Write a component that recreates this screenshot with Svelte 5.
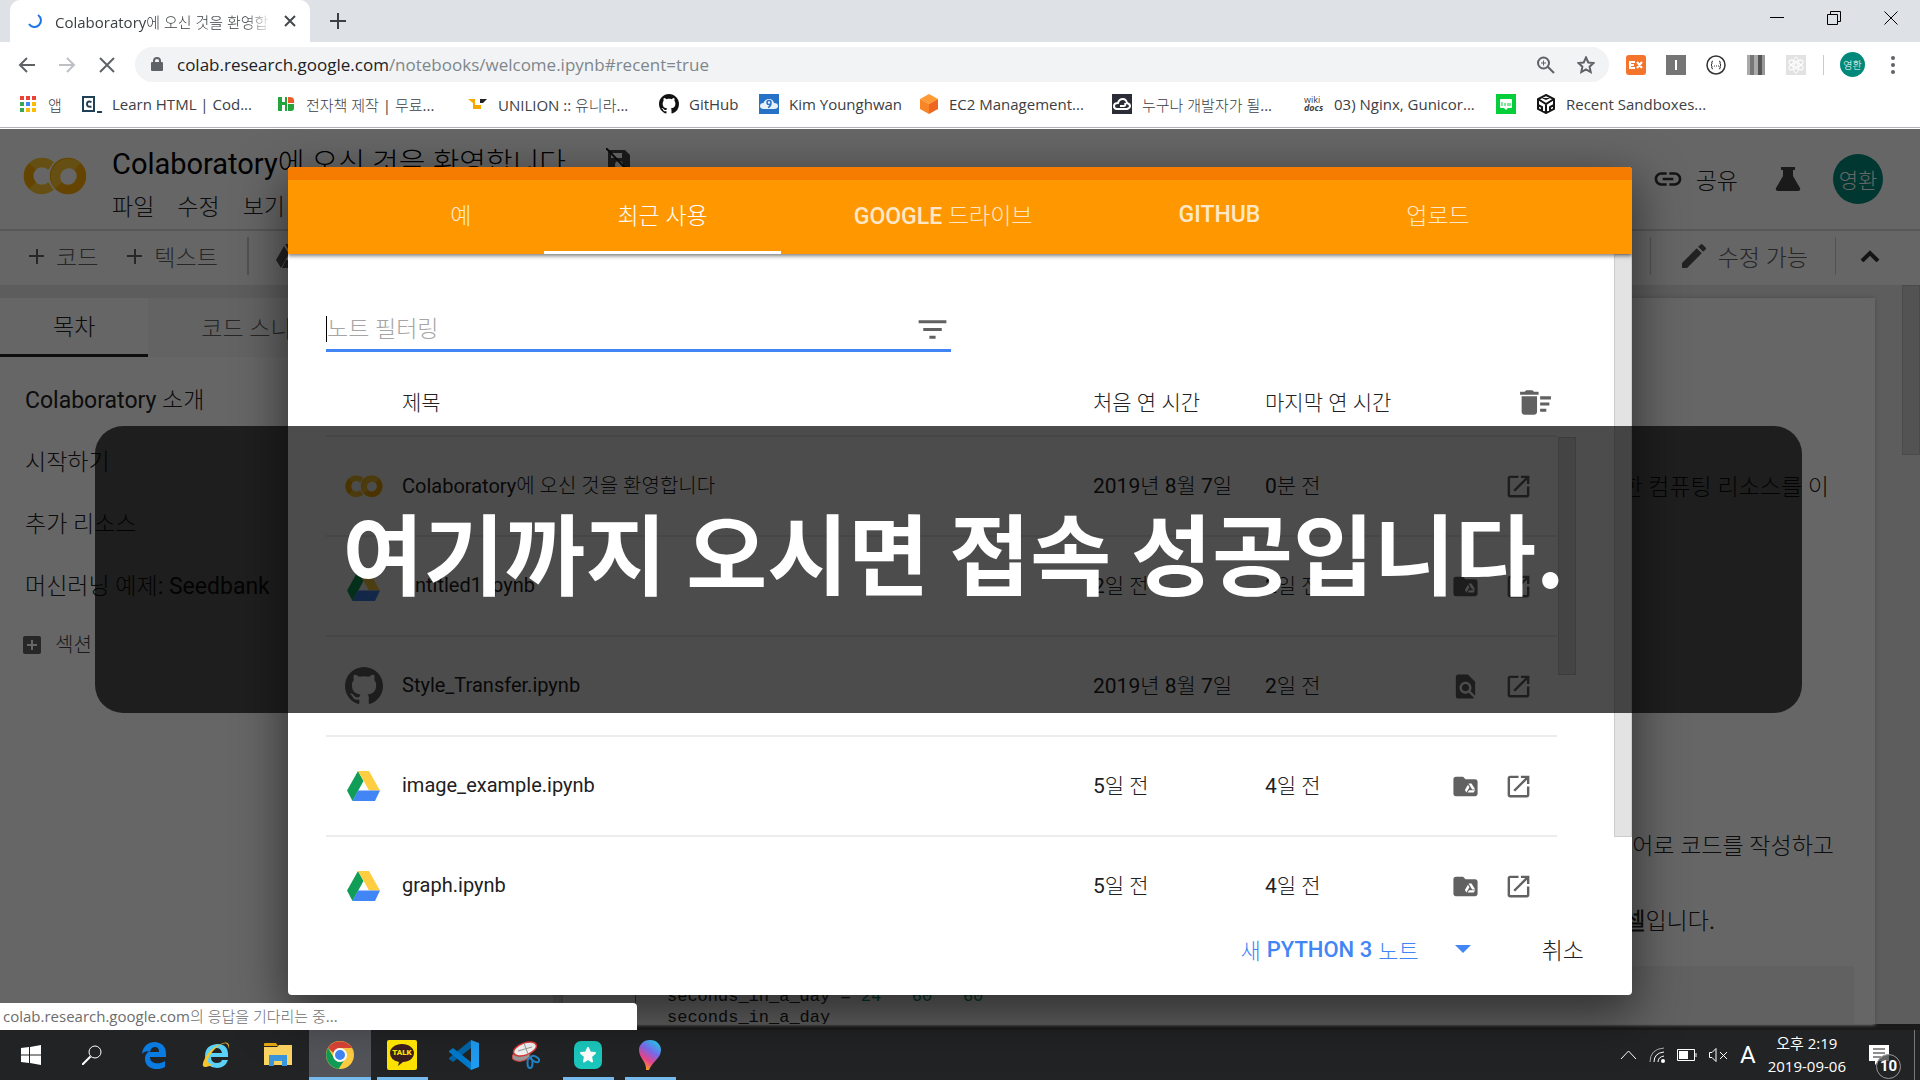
<script lang="ts">
	type Source = 'colab' | 'drive' | 'github';

	let filter = $state('');
	let activeTab = $state(1);

	const bookmarks = [
		{ icon: 'apps', label: '앱', width: 64 },
		{ icon: 'code', label: 'Learn HTML | Cod...', width: 194 },
		{ icon: 'hb', label: '전자책 제작 | 무료...', width: 192 },
		{ icon: 'unilion', label: 'UNILION :: 유니라...', width: 191 },
		{ icon: 'github', label: 'GitHub', width: 100 },
		{ icon: 'cloud', label: 'Kim Younghwan', width: 160 },
		{ icon: 'cube', label: 'EC2 Management...', width: 193 },
		{ icon: 'darkcloud', label: '누구나 개발자가 될...', width: 192 },
		{ icon: 'wiki', label: '03) Nginx, Gunicor...', width: 192 },
		{ icon: 'blog', label: '', width: 40 },
		{ icon: 'sandbox', label: 'Recent Sandboxes...', width: 190 },
	];

	const tabs = ['예', '최근 사용', 'GOOGLE 드라이브', 'GITHUB', '업로드'];

	const notebooks: { source: Source; title: string; first: string; last: string; action: string }[] = [
		{ source: 'colab', title: 'Colaboratory에 오신 것을 환영합니다', first: '2019년 8월 7일', last: '0분 전', action: '' },
		{ source: 'drive', title: 'Untitled1.ipynb', first: '2일 전', last: '2일 전', action: 'folder' },
		{ source: 'github', title: 'Style_Transfer.ipynb', first: '2019년 8월 7일', last: '2일 전', action: 'find' },
		{ source: 'drive', title: 'image_example.ipynb', first: '5일 전', last: '4일 전', action: 'folder' },
		{ source: 'drive', title: 'graph.ipynb', first: '5일 전', last: '4일 전', action: 'folder' },
	];

	const toc = ['Colaboratory 소개', '시작하기', '추가 리소스', '머신러닝 예제: Seedbank'];

	const GITHUB =
		'M8 0C3.58 0 0 3.58 0 8c0 3.54 2.29 6.53 5.47 7.59.4.07.55-.17.55-.38 0-.19-.01-.82-.01-1.49-2.01.37-2.53-.49-2.69-.94-.09-.23-.48-.94-.82-1.13-.28-.15-.68-.52-.01-.53.63-.01 1.08.58 1.23.82.72 1.21 1.87.87 2.33.66.07-.52.28-.87.51-1.07-1.78-.2-3.64-.89-3.64-3.95 0-.87.31-1.59.82-2.15-.08-.2-.36-1.02.08-2.12 0 0 .67-.21 2.2.82.64-.18 1.32-.27 2-.27s1.36.09 2 .27c1.53-1.04 2.2-.82 2.2-.82.44 1.1.16 1.92.08 2.12.51.56.82 1.27.82 2.15 0 3.07-1.87 3.75-3.65 3.95.29.25.54.73.54 1.48 0 1.07-.01 1.93-.01 2.2 0 .21.15.46.55.38A8.01 8.01 0 0 0 16 8c0-4.42-3.58-8-8-8z';
</script>

{#snippet colabLogo()}
	<svg class="colab-logo" viewBox="0 0 64 38" aria-hidden="true">
		<g fill="none" stroke-width="9.500">
			<path d="M28.500 9.500A13.500 13.500 0 1 0 28.500 28.500" stroke="#fcc62d" />
			<path d="M9.500 9.500A13.500 13.500 0 0 0 9.500 28.500" stroke="#f9ab00" />
			<circle cx="45" cy="19" r="15" stroke="#fff" />
			<circle cx="45" cy="19" r="13.500" stroke="#f9ab00" />
			<path d="M35.500 28.500A13.500 13.500 0 0 1 54.500 9.500" stroke="#fcc62d" />
		</g>
	</svg>
{/snippet}

{#snippet driveLogo()}
	<svg class="drive-logo" viewBox="0 0 33 30" aria-hidden="true">
		<path d="M11 0L0 19.500 5.500 30 16.500 10z" fill="#0f9d58" />
		<path d="M11 0h11l11 19.500H22z" fill="#ffcd40" />
		<path d="M11 19.500h22L28 30H5.500z" fill="#4285f4" />
	</svg>
{/snippet}

{#snippet bookmarkIcon(name: string)}
	<svg class="bm-icon" viewBox="0 0 20 20" aria-hidden="true">
		{#if name === 'apps'}
			<path d="M2 2h4v4H2zM8 2h4v4H8zM14 2h4v4h-4z" fill="#ea4335" />
			<path d="M2 8h4v4H2zM2 14h4v4H2z" fill="#34a853" />
			<path d="M8 8h4v4H8z" fill="#4285f4" />
			<path d="M14 8h4v4h-4zM8 14h4v4H8zM14 14h4v4h-4z" fill="#fbbc04" />
		{:else if name === 'code'}
			<path d="M1 3h11v14H1zM15 18h5" fill="none" stroke="#1f4056" stroke-width="2" />
			<path d="M9.500 8Q5 6.500 5 10t4.500 2.500" fill="none" stroke="#1f4056" stroke-width="2" />
		{:else if name === 'hb'}
			<path d="M2 3h4v5h3V3h2v14H9v-6H6v6H2z" fill="#24a53b" />
			<path d="M12 3h2q5 0 4 6h-6z" fill="#ee5a29" />
			<path d="M12 10h6v4q0 3-3 3h-3z" fill="#24a53b" />
		{:else if name === 'unilion'}
			<path d="M0 5h7v6h6v4H5V9z" fill="#f6a800" />
			<path d="M12 5h7l-4 4h-3z" fill="#222" />
		{:else if name === 'github'}
			<path d={GITHUB} transform="scale(1.250)" fill="#111" />
		{:else if name === 'cloud'}
			<path d="M0 0h20v20H0z" fill="#2672c7" />
			<path d="M5 15q-4 0-4-3t3.500-3Q6 5 10 5t5 4q4 0 4 3t-4 3z" fill="#e8f0f8" />
			<path d="M12 8.500a2 2 0 1 0-2 2q2 0 2-2 0 4-3 5" fill="none" stroke="#2672c7" stroke-width="1.500" />
		{:else if name === 'cube'}
			<path d="M10 0l9 5-9 5-9-5z" fill="#ff9a35" />
			<path d="M1 5l9 5v10l-9-5z" fill="#f98524" />
			<path d="M19 5l-9 5v10l9-5z" fill="#ee6622" />
		{:else if name === 'darkcloud'}
			<path d="M0 0h20v20H0z" fill="#2b2d36" />
			<path d="M5 15q-3 0-3-3t4-3q1-4 5-4 3 0 4 4 3 1 3 3t-3 3zM8 12h4q2 0 1-3" fill="none" stroke="#fff" stroke-width="2" />
		{:else if name === 'blog'}
			<path d="M0 0h20v20H0z" fill="#04cf3a" />
			<path d="M5 5h10q1 0 1 1v7q0 1-1 1h-3l-2 2-2-2H5q-1 0-1-1V6q0-1 1-1z" fill="#fff" />
			<path d="M6 8v4M9 9v3M12 9v3M14 9v3" stroke="#04cf3a" />
		{:else if name === 'sandbox'}
			<path d="M10 1l8 4v10l-8 4-8-4V5zM2 5l8 5 8-5M10 10v9M6 3l4 2 4-2M2 11l4 2v4M18 11l-4 2v4" fill="none" stroke="#151515" stroke-width="2" />
		{/if}
	</svg>
{/snippet}

<div class="desktop">
	<header class="chrome">
		<div class="tabstrip">
			<div class="browser-tab">
				<svg class="spinner" viewBox="0 0 16 16" aria-hidden="true">
					<path d="M10 2A6.500 6.500 0 1 1 1 11" fill="none" stroke="#1a73e8" stroke-width="2" />
				</svg>
				<span class="tab-title">Colaboratory에 오신 것을 환영합</span>
				<button class="plain" aria-label="탭 닫기">
					<svg width="12" height="12" viewBox="0 0 12 12"><path d="M1 1l10 10M11 1L1 11" stroke="#45494d" stroke-width="2" /></svg>
				</button>
			</div>
			<button class="plain new-tab" aria-label="새 탭">
				<svg width="16" height="16" viewBox="0 0 16 16"><path d="M8 0v16M0 8h16" stroke="#3c4043" stroke-width="2" /></svg>
			</button>
			<div class="window-buttons">
				<button class="plain" aria-label="최소화">
					<svg width="14" height="14" viewBox="0 0 14 14"><path d="M0 6.500h14" stroke="#000" /></svg>
				</button>
				<button class="plain" aria-label="이전 크기로">
					<svg width="14" height="14" viewBox="0 0 14 14"><path d="M.5 3.500h10v10H.5zM3.500 3V.5h10v10H11" fill="none" stroke="#000" /></svg>
				</button>
				<button class="plain" aria-label="닫기">
					<svg width="14" height="14" viewBox="0 0 14 14"><path d="M.5.5l13 13M13.500.5l-13 13" stroke="#000" /></svg>
				</button>
			</div>
		</div>

		<div class="navbar">
			<button class="plain nav" aria-label="뒤로">
				<svg width="18" height="18" viewBox="0 0 18 18"><path d="M17 9H2M9 2L2 9l7 7" fill="none" stroke="#5f6368" stroke-width="2" /></svg>
			</button>
			<button class="plain nav" aria-label="앞으로">
				<svg width="18" height="18" viewBox="0 0 18 18"><path d="M1 9h15M9 2l7 7-7 7" fill="none" stroke="#bdc1c6" stroke-width="2" /></svg>
			</button>
			<button class="plain nav" aria-label="중지">
				<svg width="18" height="18" viewBox="0 0 18 18"><path d="M2 2l14 14M16 2L2 16" stroke="#5f6368" stroke-width="2" /></svg>
			</button>
			<div class="omnibox">
				<svg width="12" height="16" viewBox="0 0 12 16" aria-hidden="true">
					<path d="M1 5h10q1 0 1 1v7q0 1-1 1H1q-1 0-1-1V6q0-1 1-1z" fill="#5f6368" />
					<path d="M3 6V4a3 3 0 0 1 6 0v2" fill="none" stroke="#5f6368" stroke-width="2" />
				</svg>
				<span class="url">colab.research.google.com<span class="url-path">/notebooks/welcome.ipynb#recent=true</span></span>
				<svg width="18" height="18" viewBox="0 0 18 18" aria-hidden="true">
					<path d="M12 7A5.500 5.500 0 1 1 1 7a5.500 5.500 0 0 1 11 0zM11 11l6 6" fill="none" stroke="#5f6368" stroke-width="2" />
					<path d="M4 7h5M6.500 4.500v5" stroke="#5f6368" />
				</svg>
				<svg width="18" height="18" viewBox="0 0 18 18" aria-hidden="true">
					<path d="M9 1.500l2.300 5 5.200.6-3.900 3.600 1.100 5.300L9 13.300 4.300 16l1.100-5.300L1.500 7.100l5.200-.6z" fill="none" stroke="#5f6368" stroke-width="2" />
				</svg>
			</div>
			<div class="extensions">
				<svg viewBox="0 0 20 20" aria-hidden="true">
					<rect width="20" height="20" rx="3" fill="#f4742b" />
					<path d="M9 7H4v6h5M4 10h4M11 7l5 6M16 7l-5 6" fill="none" stroke="#fff" stroke-width="2" />
				</svg>
				<svg viewBox="0 0 20 20" aria-hidden="true"><path d="M0 0h20v20H0z" fill="#757575" /><path d="M10 5v10" stroke="#fff" stroke-width="2" /></svg>
				<svg viewBox="0 0 20 20" aria-hidden="true">
					<circle cx="10" cy="10" r="9" fill="none" stroke="#333" stroke-width="1.500" />
					<path d="M7 6Q5 6 6 9l-1 1 1 1q-1 3 1 3M13 6q2 0 1 3l1 1-1 1q1 3-1 3" fill="none" stroke="#333" />
					<path d="M8 11h1M10 11h1M12 11h1" stroke="#333" />
				</svg>
				<svg viewBox="0 0 20 20" aria-hidden="true">
					<path d="M1 0h3v20H1z" fill="#aaa" /><path d="M4 0h4v20H4z" fill="#777" /><path d="M8 0h4v20H8z" fill="#aaa" />
					<path d="M12 0h4v20h-4z" fill="#555" /><path d="M16 0h3v20h-3z" fill="#999" />
				</svg>
				<svg viewBox="0 0 20 20" aria-hidden="true">
					<path d="M0 0h20v20H0z" fill="#e2e2e2" />
					<g fill="none" stroke="#fff">
						<ellipse cx="10" cy="10" rx="8" ry="3" transform="rotate(30 10 10)" />
						<ellipse cx="10" cy="10" rx="8" ry="3" transform="rotate(90 10 10)" />
						<ellipse cx="10" cy="10" rx="8" ry="3" transform="rotate(150 10 10)" />
						<circle cx="10" cy="10" r="2" />
					</g>
				</svg>
			</div>
			<div class="profile">영환</div>
			<button class="plain" aria-label="메뉴">
				<svg width="6" height="20" viewBox="0 0 6 20"><g fill="#5f6368"><circle cx="3" cy="3" r="2" /><circle cx="3" cy="10" r="2" /><circle cx="3" cy="17" r="2" /></g></svg>
			</button>
		</div>

		<nav class="bookmarks">
			{#each bookmarks as bookmark}
				<a href="#bookmark" class="bookmark" style:width="{bookmark.width}px" aria-label={bookmark.label || 'blog'}>
					{#if bookmark.icon === 'wiki'}
						<span class="wiki">wiki<b>docs</b></span>
					{:else}
						{@render bookmarkIcon(bookmark.icon)}
					{/if}
					<span>{bookmark.label}</span>
				</a>
			{/each}
		</nav>
	</header>

	<main class="page">
		<div class="colab-header">
			{@render colabLogo()}
			<div class="doc">
				<div class="doc-title">
					Colaboratory에 오신 것을 환영합니다
					<svg width="24" height="26" viewBox="0 0 24 26" aria-hidden="true">
						<path d="M4 2h15l5 5v15q0 2-2 2H4q-2 0-2-2V4q0-2 2-2z" fill="#444" />
						<path d="M5 5h11v5H5z" fill="#fff" /><circle cx="13" cy="17" r="4" fill="#fff" />
						<path d="M0 0l24 25" stroke="#222" stroke-width="2" />
					</svg>
				</div>
				<div class="menus"><span>파일</span><span>수정</span><span>보기</span></div>
			</div>
			<button class="plain share">
				<svg width="32" height="32" viewBox="0 0 24 24" aria-hidden="true">
					<path fill="#333" d="M3.900 12c0-1.710 1.390-3.100 3.100-3.100h4V7H7c-2.760 0-5 2.240-5 5s2.240 5 5 5h4v-1.900H7c-1.710 0-3.100-1.390-3.100-3.100zM8 13h8v-2H8v2zm9-6h-4v1.900h4c1.710 0 3.100 1.390 3.100 3.100s-1.390 3.100-3.100 3.100h-4V17h4c2.760 0 5-2.240 5-5s-2.240-5-5-5z" />
				</svg>
				공유
			</button>
			<svg width="26" height="26" viewBox="0 0 26 26" aria-hidden="true">
				<path d="M6 1h14v3h-2v6l7 12q1 3-2 3H3q-3 0-2-3l7-12V4H6z" fill="#424242" />
			</svg>
			<div class="avatar">영환</div>
		</div>

		<div class="colab-toolbar">
			<button class="plain add"><i class="plus"></i>코드</button>
			<button class="plain add"><i class="plus"></i>텍스트</button>
			<div class="drive-copy">
				<svg width="28" height="24" viewBox="0 0 28 24" aria-hidden="true"><path d="M9 0h9l10 15H18zM8 2L0 16l5 8 8-14zM10 16h18l-5 8H6z" fill="#555" /></svg>
			</div>
			<button class="plain editing">
				<svg width="32" height="32" viewBox="0 0 24 24" aria-hidden="true">
					<path d="M3 17.250V21h3.750L17.810 9.940l-3.750-3.750L3 17.250zM20.710 7.040a1 1 0 0 0 0-1.410l-2.340-2.340a1 1 0 0 0-1.410 0l-1.830 1.830 3.750 3.750z" fill="#555" />
				</svg>
				수정 가능
			</button>
			<button class="plain collapse" aria-label="접기">
				<svg width="20" height="12" viewBox="0 0 20 12"><path d="M2 11l8-8 8 8" fill="none" stroke="#333" stroke-width="4" /></svg>
			</button>
		</div>

		<div class="workspace">
			<aside class="sidebar">
				<div class="side-tabs">
					<button class="plain side-tab current">목차</button>
					<button class="plain side-tab">코드 스니펫</button>
				</div>
				<ul class="toc">
					{#each toc as entry}
						<li>{entry}</li>
					{/each}
					<li class="section">
						<svg width="18" height="18" viewBox="0 0 18 18" aria-hidden="true"><rect width="18" height="18" rx="2" fill="#616161" /><path d="M9 4v10M4 9h10" stroke="#fff" stroke-width="2" /></svg>
						섹션
					</li>
				</ul>
			</aside>
			<article class="notebook">
				<p class="para first">한 컴퓨팅 리소스를 이</p>
				<p class="para">어로 코드를 작성하고</p>
				<p class="para cell"><b>셀</b>입니다.</p>
				<pre class="code">seconds_in_a_day = <em>24</em> * <em>60</em> * <em>60</em>
seconds_in_a_day</pre>
			</article>
			<div class="page-thumb"></div>
		</div>

		<div class="backdrop">
			<div class="dialog" role="dialog" aria-label="노트 열기">
				<div class="dialog-tabs" role="tablist">
					{#each tabs as tab, i}
						<button class="dialog-tab" class:active={i === activeTab} role="tab" aria-selected={i === activeTab} onclick={() => (activeTab = i)}>{tab}</button>
					{/each}
				</div>
				<div class="dialog-body">
					<div class="filter">
						<i class="caret"></i>
						<input aria-label="노트 필터링" placeholder="노트 필터링" bind:value={filter} />
						<svg width="37" height="37" viewBox="0 0 24 24" aria-hidden="true"><path d="M10 18h4v-2h-4v2zM3 6v2h18V6H3zm3 7h12v-2H6v2z" fill="#616161" /></svg>
					</div>
					<div class="list">
						<table>
							<thead>
								<tr>
									<th class="col-icon" aria-label="종류"></th>
									<th>제목</th>
									<th class="col-first">처음 연 시간</th>
									<th class="col-last">마지막 연 시간</th>
									<th class="col-actions">
										<button class="plain" aria-label="목록 지우기">
											<svg width="37" height="37" viewBox="0 0 24 24"><path d="M15 16h4v2h-4zm0-8h7v2h-7zm0 4h6v2h-6zM3 18c0 1.100.9 2 2 2h6c1.100 0 2-.9 2-2V8H3v10zM14 5h-3l-1-1H6L5 5H2v2h12z" fill="#616161" /></svg>
										</button>
									</th>
								</tr>
							</thead>
							<tbody>
								{#each notebooks as nb}
									<tr>
										<td class="col-icon">
											{#if nb.source === 'colab'}
												{@render colabLogo()}
											{:else if nb.source === 'drive'}
												{@render driveLogo()}
											{:else}
												<svg class="gh-logo" viewBox="0 0 16 16" aria-hidden="true"><path d={GITHUB} fill="#616161" /></svg>
											{/if}
										</td>
										<td class="name">{nb.title}</td>
										<td class="date">{nb.first}</td>
										<td class="date">{nb.last}</td>
										<td class="col-actions">
											<div class="actions">
												{#if nb.action}
													<button class="plain" aria-label="위치 보기">
														<svg width="29" height="29" viewBox="0 0 24 24">
															{#if nb.action === 'folder'}
																<path d="M10 4H4c-1.100 0-2 .9-2 2v12c0 1.100.9 2 2 2h16c1.100 0 2-.9 2-2V8c0-1.100-.9-2-2-2h-8l-2-2z" fill="#616161" />
																<path d="M14.500 9.500h2.500l3 5h-2.500zM14 10.500l1.300 2.200-2.600 4.300-1.200-2.200zM15 15h5l-1.300 2h-5z" fill="#fff" />
															{:else}
																<path d="M20 19.590V8l-6-6H6c-1.100 0-2 .9-2 2v16c0 1.100.890 2 2 2h12c.450 0 .850-.150 1.190-.4l-4.430-4.430c-.8.520-1.740.830-2.760.830-2.760 0-5-2.240-5-5s2.240-5 5-5 5 2.240 5 5c0 1.020-.310 1.960-.830 2.750L20 19.590zM9 13c0 1.660 1.340 3 3 3s3-1.340 3-3-1.340-3-3-3-3 1.340-3 3z" fill="#616161" />
															{/if}
														</svg>
													</button>
												{/if}
												<button class="plain" aria-label="새 탭에서 열기">
													<svg width="29" height="29" viewBox="0 0 24 24"><path d="M19 19H5V5h7V3H5c-1.110 0-2 .9-2 2v14c0 1.100.890 2 2 2h14c1.100 0 2-.9 2-2v-7h-2v7zM14 3v2h3.590l-9.830 9.830 1.410 1.410L19 6.410V10h2V3h-7z" fill="#616161" /></svg>
												</button>
											</div>
										</td>
									</tr>
								{/each}
							</tbody>
						</table>
						<div class="list-thumb"></div>
					</div>
					<div class="dialog-thumb"></div>
				</div>
				<div class="dialog-footer">
					<button class="plain new-note">새 <b>PYTHON 3</b> 노트</button>
					<button class="plain more" aria-label="노트 종류"><svg width="16" height="8" viewBox="0 0 16 8"><path d="M0 0h16L8 8z" fill="#4285f4" /></svg></button>
					<button class="plain">취소</button>
				</div>
			</div>
		</div>
		<div class="status">colab.research.google.com의 응답을 기다리는 중...</div>
	</main>

	<footer class="taskbar">
		<button class="plain task start" aria-label="시작">
			<svg width="20" height="20" viewBox="0 0 20 20"><path d="M0 3l8-1v7.500H0zM9 2l11-2v9.500H9zM0 10.500h8V18l-8-1zM9 10.500h11V20L9 18z" fill="#fff" /></svg>
		</button>
		<button class="plain task" aria-label="검색">
			<svg width="20" height="20" viewBox="0 0 20 20"><circle cx="13" cy="7" r="6" fill="none" stroke="#fff" /><path d="M8.500 11.500L0 20" stroke="#fff" stroke-width="2" /></svg>
		</button>
		<button class="plain task" aria-label="Edge">
			<svg width="26" height="27" viewBox="0 0 26 27"><path d="M1 12C2 4 7 0 14 0q11 1 11 12v3H9c0 7 9 8 15 4v6c-9 5-20 1-20-8 0-4 2-7 5-8q-6 0-8 3zm8-2h9q0-5-4-5t-5 5z" fill="#0a7be0" /></svg>
		</button>
		<button class="plain task" aria-label="Internet Explorer">
			<svg width="30" height="28" viewBox="0 0 30 28">
				<path d="M27 16H10q0 6 6 6 4 0 5-3h6q-3 8-11 8Q4 26 4 15T16 3q12 0 11 13zm-17-4h11q-1-5-5.500-5T10 12z" fill="#5ad2f7" />
				<path d="M28 8Q29 0 22 2 9 7 4 17t1 9q3 0 7-3-6 1-5-5 4-9 12-14t9 4z" fill="#f6c52c" />
			</svg>
		</button>
		<button class="plain task" aria-label="파일 탐색기">
			<svg width="28" height="24" viewBox="0 0 28 24"><path d="M0 1q0-1 1-1h11l2 3H0z" fill="#e5a50f" /><path d="M0 4h13l2-2h13v20H0z" fill="#fcd462" /><path d="M5 12h18v11h-5v-5h-8v5H5z" fill="#3a96dd" /></svg>
		</button>
		<button class="plain task focused" aria-label="Chrome">
			<svg width="28" height="28" viewBox="0 0 28 28">
				<circle cx="14" cy="14" r="14" fill="#ffcd40" />
				<path d="M2 7a14 14 0 0 1 24.100 0H14a7 7 0 0 0-6.500 5z" fill="#db4437" />
				<path d="M2 7a14 14 0 0 0 10.500 20.900L19 18q-7 6-11-1z" fill="#0f9d58" />
				<circle cx="14" cy="14" r="6" fill="#4285f4" stroke="#fff" stroke-width="2" />
			</svg>
		</button>
		<button class="plain task running" aria-label="카카오톡">
			<span class="kakao">
				<svg width="24" height="22" viewBox="0 0 24 22"><path d="M12 0c7 0 12 4 12 9s-5 9-11 9l-5 4 1-4Q0 16 0 9c0-5 5-9 12-9z" fill="#3a1d1d" /></svg>
				<span>TALK</span>
			</span>
		</button>
		<button class="plain task" aria-label="Visual Studio Code">
			<svg width="30" height="30" viewBox="0 0 30 30">
				<path d="M22 0v8L4 22l-4-3v-1z" fill="#0065a9" /><path d="M0 11l4-3 18 14v8L0 12z" fill="#007acc" /><path d="M22 0l8 3v24l-8 3z" fill="#1f9cf0" />
			</svg>
		</button>
		<button class="plain task" aria-label="캡처 도구">
			<svg width="28" height="28" viewBox="0 0 28 28">
				<ellipse cx="9" cy="15" rx="9" ry="5" fill="#999" stroke="#c44" transform="rotate(-10 9 15)" />
				<ellipse cx="13" cy="8" rx="12" ry="6" fill="#f4f4f4" stroke="#d33" stroke-width="1.500" transform="rotate(-20 13 8)" />
				<path d="M6 10L20 6M12 2l5 14" stroke="#999" />
				<g fill="none" stroke="#2383c4" stroke-width="2"><ellipse cx="18" cy="22" rx="2.500" ry="5" /><ellipse cx="23" cy="18" rx="4.500" ry="2.500" transform="rotate(30 23 18)" /></g>
			</svg>
		</button>
		<button class="plain task running" aria-label="즐겨찾기">
			<svg width="28" height="28" viewBox="0 0 28 28"><rect width="28" height="28" rx="7" fill="#1bc8bd" /><path d="M14 7l2 4.500 5 .5-4 3.500 1 5-4-2.500-4 2.500 1-5L7 12l5-.5z" fill="#fff" stroke="#fff" stroke-width="2" stroke-linejoin="round" /></svg>
		</button>
		<button class="plain task running" aria-label="그림판 3D">
			<svg width="24" height="30" viewBox="0 0 24 30">
				<defs><linearGradient id="drop" x1="0.800" y1="0" x2="0.300" y2="1"><stop offset="0" stop-color="#23d5f5" /><stop offset="0.400" stop-color="#7a6cf0" /><stop offset="0.700" stop-color="#e8448c" /><stop offset="1" stop-color="#f7a823" /></linearGradient></defs>
				<path d="M12 0c7 0 11 5 11 10 0 8-9 12-12 20H8C9 22 1 18 1 10 1 5 5 0 12 0z" fill="url(#drop)" />
			</svg>
		</button>

		<div class="tray">
			<svg width="17" height="10" viewBox="0 0 17 10" aria-hidden="true"><path d="M1 9l7.500-8L16 9" fill="none" stroke="#fff" /></svg>
			<svg width="16" height="16" viewBox="0 0 16 16" aria-hidden="true">
				<g fill="none" stroke="#aaa"><path d="M1 15Q1 2 15 1" /><path d="M5 15Q5 6 15 5" stroke="#fff" /><path d="M9 15q0-5 6-6" stroke="#fff" /></g><circle cx="14" cy="14" r="2" fill="#fff" />
			</svg>
			<svg width="20" height="12" viewBox="0 0 20 12" aria-hidden="true"><path d="M.5.5h17v11H.5zM19 4v4" fill="none" stroke="#fff" /><path d="M2 2h9v8H2z" fill="#fff" /></svg>
			<svg width="19" height="14" viewBox="0 0 19 14" aria-hidden="true"><path d="M.5 4.500H3l4-4v13l-4-4H.5zM11 4l7 7M18 4l-7 7" fill="none" stroke="#fff" /></svg>
			<span class="ime">A</span>
			<div class="clock"><span>오후 2:19</span><span>2019-09-06</span></div>
			<div class="notify">
				<svg width="20" height="20" viewBox="0 0 20 20" aria-hidden="true"><path d="M0 0h20v16H10l-4 4v-4H0z" fill="#fff" /><path d="M4 4h12M4 8h12M4 12h8" stroke="#1f1f20" /></svg>
				<span class="count">10</span>
			</div>
		</div>
	</footer>

	<div class="caption">여기까지 오시면 접속 성공입니다.</div>
</div>

<style>
	:global(body) {
		margin: 0;
		overflow: hidden;
	}
	.desktop {
		position: relative;
		display: flex;
		flex-direction: column;
		height: 100vh;
		overflow: hidden;
		font-family: Roboto, 'Noto Sans CJK KR Light', 'Noto Sans CJK KR', sans-serif;
		font-size: 23px;
		color: #212121;
	}
	.desktop svg {
		display: block;
		flex: none;
	}
	.plain {
		display: flex;
		align-items: center;
		padding: 0;
		border: none;
		background: none;
		font: inherit;
		color: inherit;
		cursor: pointer;
	}

	/* browser frame */
	.chrome {
		flex: none;
		background: #fff;
		border-bottom: 1px solid #b0b3b7;
		margin-bottom: 1px;
		font-family: 'Open Sans', 'Noto Sans CJK KR Light', 'Noto Sans CJK KR', sans-serif;
		font-size: 15px;
		color: #3c4043;
	}
	.tabstrip {
		display: flex;
		height: 42px;
		background: #dee1e6;
	}
	.browser-tab {
		display: flex;
		align-items: center;
		box-sizing: border-box;
		width: 300px;
		margin-left: 10px;
		padding: 0 14px 0 18px;
		background: #fff;
		border-radius: 10px 10px 0 0;
	}
	.spinner {
		width: 16px;
	}
	.tab-title {
		flex: 1;
		overflow: hidden;
		margin: 0 12px 0 11px;
		white-space: nowrap;
		mask-image: linear-gradient(90deg, #000 88%, transparent);
	}
	.new-tab {
		margin-left: 20px;
	}
	.window-buttons {
		display: flex;
		gap: 43px;
		margin: 0 22px 6px auto;
	}
	.navbar {
		display: flex;
		align-items: center;
		height: 45px;
		padding: 0 24px 0 18px;
	}
	.nav {
		margin-right: 22px;
	}
	.omnibox {
		display: flex;
		flex: 1;
		align-items: center;
		gap: 22px;
		height: 35px;
		margin-left: -3px;
		padding: 0 14px 0 16px;
		border-radius: 18px;
		background: #f1f3f4;
		font-size: 17px;
	}
	.url {
		flex: 1;
		margin-left: -8px;
		color: #202124;
	}
	.url-path {
		color: #80868b;
	}
	.extensions {
		display: flex;
		gap: 20px;
		margin: 0 16px 0 17px;
		padding-right: 17px;
		border-right: 1px solid #c8cacd;
	}
	.extensions svg {
		width: 20px;
	}
	.profile {
		display: grid;
		place-items: center;
		width: 25px;
		height: 25px;
		margin-right: 25px;
		border-radius: 50%;
		background: #00897b;
		color: #fff;
		font-size: 10px;
	}
	.bookmarks {
		display: flex;
		align-items: center;
		height: 34px;
		padding: 0 0 6px 18px;
	}
	.bookmark {
		display: flex;
		align-items: center;
		gap: 10px;
		color: inherit;
		text-decoration: none;
		white-space: nowrap;
	}
	.bm-icon {
		width: 20px;
	}
	.wiki {
		display: flex;
		flex-direction: column;
		width: 20px;
		font-size: 9px;
		line-height: 8px;
	}
	.wiki b {
		font-style: italic;
	}

	/* notebook page */
	.page {
		position: relative;
		display: flex;
		flex: 1;
		flex-direction: column;
		min-height: 0;
		background: #fff;
		border-bottom: 6px solid #1a1a1a;
	}
	.colab-header {
		display: flex;
		align-items: center;
		height: 100px;
		padding: 0 37px 0 23px;
		border-bottom: 2px solid #dadada;
	}
	.colab-logo {
		width: 64px;
	}
	.colab-header > .colab-logo {
		margin-bottom: 6px;
	}
	.doc {
		display: flex;
		flex: 1;
		flex-direction: column;
		gap: 8px;
		margin-left: 25px;
		padding-top: 9px;
	}
	.doc-title {
		display: flex;
		align-items: center;
		gap: 40px;
		font-size: 29px;
		line-height: 40px;
		color: #000;
	}
	.doc-title svg {
		margin-bottom: 6px;
	}
	.menus {
		display: flex;
		gap: 23px;
		line-height: 32px;
	}
	.share {
		gap: 12px;
		margin-right: 37px;
	}
	.avatar {
		display: grid;
		place-items: center;
		width: 50px;
		height: 50px;
		margin-left: 32px;
		border-radius: 50%;
		background: #00897b;
		color: #fff;
		font-size: 21px;
	}
	.colab-toolbar {
		display: flex;
		align-items: center;
		height: 50px;
		padding: 0 40px 4px 29px;
		color: #616161;
	}
	.add {
		gap: 12px;
		margin-right: 29px;
	}
	.plus {
		width: 15px;
		height: 15px;
		background: linear-gradient(#616161, #616161) center / 15px 2px no-repeat, linear-gradient(#616161, #616161) center / 2px 15px no-repeat;
	}
	.drive-copy {
		padding: 7px 0 7px 27px;
		border-left: 2px solid #ccc;
	}
	.editing {
		gap: 8px;
		height: 38px;
		margin-left: auto;
		padding: 0 27px;
		border-left: 1px solid #ccc;
	}
	.collapse {
		height: 38px;
		padding-left: 24px;
		border-left: 1px solid #ccc;
	}
	.workspace {
		position: relative;
		display: flex;
		flex: 1;
		min-height: 0;
		padding-top: 13px;
		background: #e8e8e8;
	}
	.sidebar {
		width: 553px;
		margin-right: 10px;
		background: #fff;
	}
	.side-tabs {
		display: flex;
		height: 59px;
		background: #f7f7f7;
	}
	.side-tab {
		padding: 0 53px 2px;
		color: #616161;
	}
	.side-tab.current {
		border-bottom: 3px solid #212121;
		background: #fff;
		color: #212121;
	}
	.toc {
		margin: 0;
		padding: 13px 0 0 25px;
		list-style: none;
		line-height: 62px;
	}
	.toc .section {
		display: flex;
		align-items: center;
		gap: 14px;
		height: 54px;
		margin-left: -2px;
		font-size: 20px;
		color: #424242;
	}
	.notebook {
		flex: 1;
		margin-right: 45px;
		background: #fff;
		box-shadow: 0 0 4px #bbb;
		overflow: hidden;
	}
	.para {
		margin: 0;
		padding-right: 41px;
		line-height: 75px;
		text-align: right;
	}
	.first {
		padding: 152px 46px 284px 0;
	}
	.cell {
		padding-right: 160px;
	}
	.code {
		margin: 7px 21px 0 72px;
		padding: 20px 31px;
		border-left: 1px solid #777;
		background: #f2f2f2;
		font: 17px/21px 'Liberation Mono', monospace;
	}
	.code em {
		font-style: normal;
		color: #09885a;
	}
	.page-thumb {
		position: absolute;
		top: 0;
		right: 0;
		width: 16px;
		height: 168px;
		border: 1px solid #b8b8b8;
		background: #cfcfcf;
	}

	/* open-notebook dialog */
	.backdrop {
		position: absolute;
		inset: 0;
		display: flex;
		justify-content: center;
		padding: 38px 0 29px;
		background: rgba(0, 0, 0, 0.6);
	}
	.dialog {
		display: flex;
		flex-direction: column;
		width: 70%;
		overflow: hidden;
		border-radius: 4px;
		background: #fff;
		box-shadow: 0 16px 48px 4px rgba(0, 0, 0, 0.5);
	}
	.dialog-tabs {
		position: relative;
		display: flex;
		justify-content: center;
		flex: none;
		height: 74px;
		border-top: 13px solid #f57c00;
		background: #ff9800;
		box-shadow: 0 2px 4px rgba(0, 0, 0, 0.5);
		z-index: 1;
	}
	.dialog-tab {
		padding: 0 73px 3px;
		border: none;
		border-bottom: 3px solid transparent;
		background: none;
		font: 500 23px Roboto, 'Noto Sans CJK KR Light', 'Noto Sans CJK KR', sans-serif;
		color: rgba(255, 255, 255, 0.8);
		cursor: pointer;
	}
	.dialog-tab.active {
		border-color: #fff;
		color: #fff;
	}
	.dialog-body {
		position: relative;
		flex: 1;
		min-height: 0;
		padding: 55px 75px 0 38px;
		overflow: hidden;
	}
	.filter {
		display: flex;
		align-items: center;
		width: 625px;
		height: 40px;
		border-bottom: 3px solid #4285f4;
	}
	.caret {
		width: 1px;
		height: 26px;
		background: #000;
	}
	.filter input {
		flex: 1;
		padding: 0;
		border: none;
		outline: none;
		font: inherit;
	}
	.filter input::placeholder {
		color: #a5a5a5;
	}
	.list {
		position: relative;
		margin-top: 14px;
	}
	table {
		width: 100%;
		border-collapse: collapse;
		table-layout: fixed;
		font-size: 21px;
	}
	tr {
		height: 100px;
		border-bottom: 2px solid #ececec;
	}
	thead tr {
		height: 70px;
	}
	th,
	td {
		padding: 0;
		text-align: left;
		font-weight: 400;
	}
	.name {
		padding-bottom: 3px;
		font-size: 20px;
	}
	.date {
		padding-bottom: 5px;
	}
	.col-icon {
		width: 76px;
	}
	.col-icon svg {
		width: 38px;
		margin-left: 19px;
	}
	.col-icon .drive-logo {
		width: 33px;
		margin-left: 21px;
	}
	.col-first {
		width: 172px;
	}
	.col-last {
		width: 170px;
	}
	.col-actions {
		width: 122px;
	}
	th .plain {
		margin-left: 82px;
		padding-top: 3px;
	}
	.actions {
		display: flex;
		justify-content: flex-end;
		gap: 24px;
		padding-right: 24px;
	}
	.list-thumb {
		position: absolute;
		top: 71px;
		right: -19px;
		width: 16px;
		height: 236px;
		border: 1px solid #cdcdcd;
		background: #e3e3e3;
	}
	.dialog-thumb {
		position: absolute;
		top: 0;
		right: 0;
		width: 16px;
		height: 581px;
		border: 1px solid #ccc;
		background: #e3e3e3;
	}
	.dialog-footer {
		display: flex;
		flex: none;
		align-items: center;
		justify-content: flex-end;
		height: 84px;
		padding: 0 48px 4px 0;
	}
	.new-note {
		gap: 6px;
		font-size: 22px;
		color: #4285f4;
	}
	.new-note b {
		font-weight: 500;
	}
	.more {
		margin: 0 71px 0 36px;
	}
	.status {
		position: absolute;
		bottom: -6px;
		left: 0;
		width: 634px;
		height: 27px;
		padding-left: 3px;
		border-radius: 0 4px 0 0;
		background: #fff;
		font: 15px/27px 'Open Sans', 'Noto Sans CJK KR Light', 'Noto Sans CJK KR', sans-serif;
		color: #6d6d6d;
	}

	/* taskbar */
	.taskbar {
		display: flex;
		flex: none;
		height: 50px;
		background: #222325;
		color: #fff;
	}
	.task {
		justify-content: center;
		width: 62px;
		padding-top: 3px;
		border-bottom: 3px solid transparent;
		box-sizing: border-box;
	}
	.start {
		width: 61px;
	}
	.running {
		background: linear-gradient(#76b9ed, #76b9ed) center bottom / 51px 3px no-repeat border-box;
	}
	.focused {
		border-color: #76b9ed;
		background: #53545a;
	}
	.kakao {
		position: relative;
		display: grid;
		place-items: center;
		width: 30px;
		height: 30px;
		border-radius: 2px;
		background: #fae100;
	}
	.kakao span {
		position: absolute;
		top: 8px;
		font-size: 8px;
		font-weight: 900;
		color: #fae100;
	}
	.tray {
		display: flex;
		align-items: center;
		gap: 12px;
		margin-left: auto;
		padding-right: 4px;
		border-right: 1px solid #777;
		margin-right: 5px;
	}
	.ime {
		font-size: 24px;
	}
	.clock {
		display: flex;
		flex-direction: column;
		align-items: center;
		margin: 0 11px 0 0;
		font: 15px/23px 'Open Sans', 'Noto Sans CJK KR', sans-serif;
	}
	.notify {
		position: relative;
		width: 41px;
	}
	.count {
		position: absolute;
		top: 9px;
		left: 7px;
		width: 23px;
		height: 23px;
		border: 1px solid #999;
		border-radius: 50%;
		background: rgba(34, 35, 37, 0.7);
		font-size: 15px;
		font-weight: 700;
		line-height: 23px;
		text-align: center;
	}

	.caption {
		position: absolute;
		top: 426px;
		right: 118px;
		left: 95px;
		box-sizing: border-box;
		height: 287px;
		padding-left: 10px;
		border-radius: 28px;
		background: rgba(0, 0, 0, 0.7);
		color: #fff;
		font: bold 88px/248px 'Noto Sans CJK KR', sans-serif;
		text-align: center;
		white-space: nowrap;
	}
</style>
